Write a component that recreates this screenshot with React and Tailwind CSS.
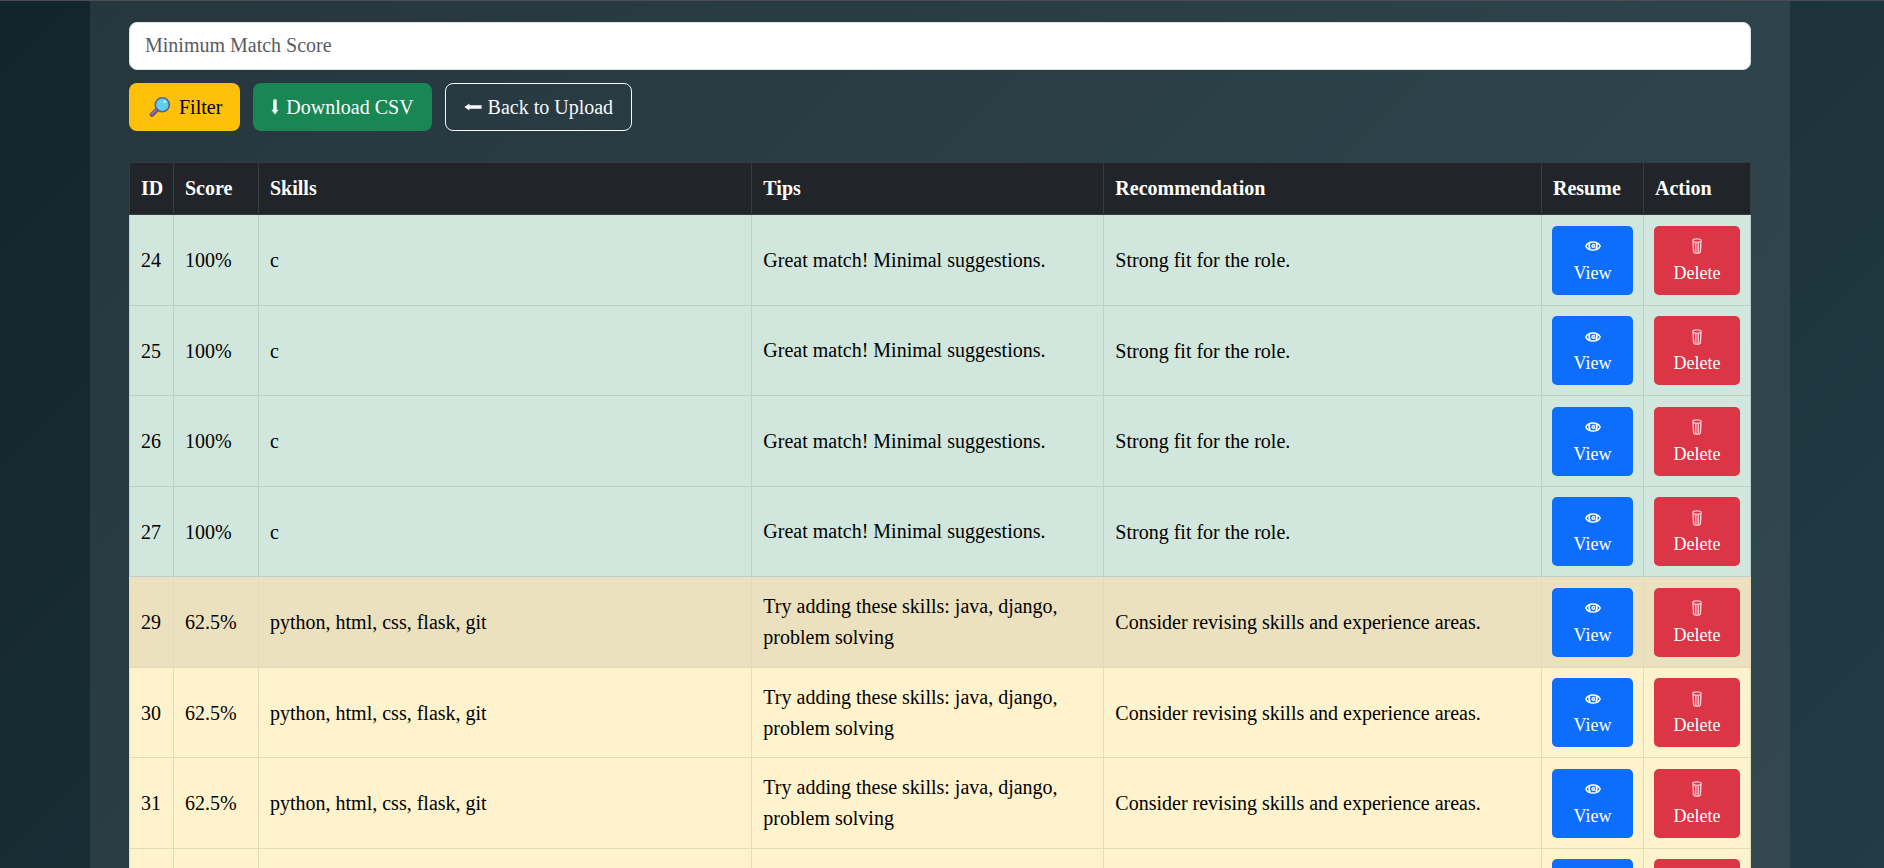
const FIT = "Great match! Minimal suggestions.";
const ROLE = "Strong fit for the role.";
const ADD = "Try adding these skills: java, django, problem solving";
const REVISE = "Consider revising skills and experience areas.";
const STACK = "python, html, css, flask, git";

const rows = [
  { id: 24, score: "100%", skills: "c", tips: FIT, rec: ROLE, tone: "good" },
  { id: 25, score: "100%", skills: "c", tips: FIT, rec: ROLE, tone: "good" },
  { id: 26, score: "100%", skills: "c", tips: FIT, rec: ROLE, tone: "good" },
  { id: 27, score: "100%", skills: "c", tips: FIT, rec: ROLE, tone: "good" },
  { id: 29, score: "62.5%", skills: STACK, tips: ADD, rec: REVISE, tone: "active" },
  { id: 30, score: "62.5%", skills: STACK, tips: ADD, rec: REVISE, tone: "fair" },
  { id: 31, score: "62.5%", skills: STACK, tips: ADD, rec: REVISE, tone: "fair" },
  { id: 32, score: "62.5%", skills: STACK, tips: ADD, rec: REVISE, tone: "fair" },
];

const tones = {
  good: "bg-[#d1e7dd] border-[#bcd0c7]",
  active: "bg-[#ece1be] border-[#e6dbb9]",
  fair: "bg-[#fff3cd] border-[#e6dbb9]",
};

function Magnifier() {
  return (
    <svg viewBox="0 0 22 22" className="ml-0.5 size-[22px]" aria-hidden="true">
      <path d="M8.6 13.2 3 18.6" stroke="#6d4a86" strokeWidth="4.4" strokeLinecap="round" />
      <path d="M8.2 12.9 2.8 18" stroke="#9a6bb3" strokeWidth="2" strokeLinecap="round" />
      <circle cx="13.3" cy="8.7" r="7" fill="#5fcdec" stroke="#5a5f9e" strokeWidth="1.6" />
      <circle cx="15.8" cy="5.8" r="1.3" fill="#c5f1fb" />
    </svg>
  );
}

function ArrowDown() {
  return (
    <svg viewBox="0 0 8 16" className="h-4 w-2" fill="currentColor" aria-hidden="true">
      <path d="M2.3 0.5h3.4v10.2H7.6L4 15.5 0.4 10.7H2.3z" />
    </svg>
  );
}

function ArrowLeft() {
  return (
    <svg viewBox="0 0 18 8" className="h-2 w-[18px]" fill="currentColor" aria-hidden="true">
      <path d="M17.6 2.2v3.6H5.4V7.6L0.4 4 5.4 0.4V2.2z" />
    </svg>
  );
}

function Eye() {
  return (
    <svg viewBox="0 0 16 10" className="h-2.5 w-4" fill="none" stroke="currentColor" aria-hidden="true">
      <path d="M0.8 5C2 2.2 4.8 0.9 8 0.9S14 2.2 15.2 5C14 7.8 11.2 9.1 8 9.1S2 7.8 0.8 5z" strokeWidth="1.5" />
      <path d="M4.7 2.2C3.8 4 4 6.3 5.2 7.9M11.3 2.2C12.2 4 12 6.3 10.8 7.9" strokeWidth="1.6" />
      <path d="M9.8 3.6C8.6 2.9 6.8 3.7 6.9 5.2C7 6.7 9.6 6.9 9.7 5.2H8.3" strokeWidth="1.3" />
    </svg>
  );
}

function Trash() {
  return (
    <svg viewBox="0 0 10 16" className="h-4 w-2.5" fill="none" stroke="#f9cfd6" aria-hidden="true">
      <ellipse cx="5" cy="2.6" rx="4.3" ry="1.7" strokeWidth="1.2" />
      <path d="M1.1 3.5 1.6 14C2 14.9 3.3 15.3 5 15.3S8 14.9 8.4 14L8.9 3.5" strokeWidth="1.4" />
      <path d="M3.8 5V14.5M6.2 5V14.5" strokeWidth="1.3" />
    </svg>
  );
}

const bar = "flex h-12 items-center rounded-lg px-[18px] text-xl";
const act =
  "flex h-[69px] w-full flex-col items-center rounded-[5px] pt-[7px] text-lg leading-[27px] text-white";

export default function App() {
  return (
    <div className="min-h-screen border-t border-[#4a4d51] bg-linear-[135deg,#13252c,#223b45] pr-[94px] pl-[90px] font-['Liberation_Serif',serif] text-xl text-black">
      <main className="bg-white/8 px-[39px] pt-[21px]">
        <form className="flex flex-col gap-[13px]" onSubmit={(e) => e.preventDefault()}>
          <input
            type="text"
            aria-label="Minimum Match Score"
            placeholder="Minimum Match Score"
            className="h-12 w-full rounded-lg border border-[#dee2e6] bg-white px-[15px] pb-0.5 text-xl placeholder:text-[#595c5f]"
          />
          <div className="flex gap-[13px]">
            <button type="submit" className={bar + " gap-2 bg-[#ffc107] text-black"}>
              <Magnifier />
              Filter
            </button>
            <a href="#download" className={bar + " gap-[7px] bg-[#198754] text-white"}>
              <ArrowDown />
              Download CSV
            </a>
            <a href="#upload" className={bar + " gap-1.5 border border-[#f8f9fa] text-[#f8f9fa]"}>
              <ArrowLeft />
              Back to Upload
            </a>
          </div>
        </form>

        <table className="mt-[31px] w-full table-fixed border-collapse text-left">
          <colgroup>
            <col className="w-[44px]" />
            <col className="w-[85px]" />
            <col />
            <col className="w-[352px]" />
            <col className="w-[27%]" />
            <col className="w-[102px]" />
            <col className="w-[107px]" />
          </colgroup>
          <thead>
            <tr className="h-[52px] bg-[#212529] text-white">
              {["ID", "Score", "Skills", "Tips", "Recommendation", "Resume", "Action"].map((h) => (
                <th key={h} scope="col" className="border border-[#373b3e] pr-2 pb-0.5 pl-[11px] font-bold">
                  {h}
                </th>
              ))}
            </tr>
          </thead>
          <tbody>
            {rows.map((r) => {
              const cell = "border " + tones[r.tone];
              const text = cell + " pr-2 pl-[11px]";
              const control = cell + " px-2.5";
              return (
                <tr key={r.id} className="odd:h-[91px] even:h-[90px]">
                  <td className={text}>{r.id}</td>
                  <td className={text}>{r.score}</td>
                  <td className={text}>{r.skills}</td>
                  <td className={text + " leading-[31px]"}>{r.tips}</td>
                  <td className={text}>{r.rec}</td>
                  <td className={control}>
                    <a href={"#resume-" + r.id} className={act + " bg-[#0d6efd]"}>
                      <span className="flex h-[27px] items-center">
                        <Eye />
                      </span>
                      View
                    </a>
                  </td>
                  <td className={control}>
                    <button type="button" className={act + " bg-[#dc3545]"}>
                      <span className="flex h-[27px] items-center">
                        <Trash />
                      </span>
                      Delete
                    </button>
                  </td>
                </tr>
              );
            })}
          </tbody>
        </table>
      </main>
    </div>
  );
}
